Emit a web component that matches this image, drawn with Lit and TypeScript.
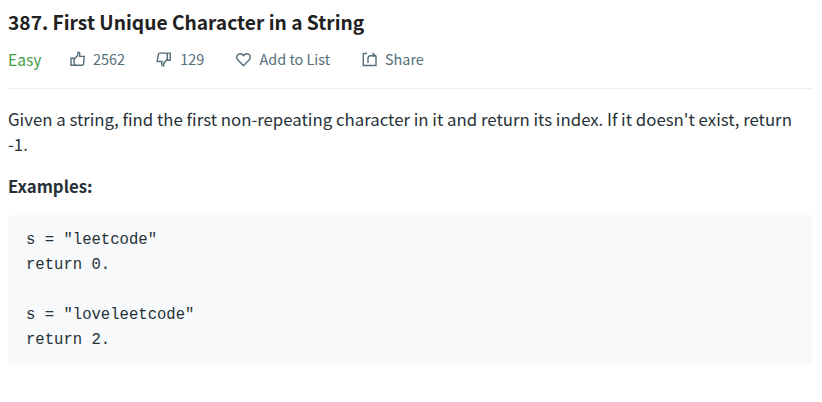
import { LitElement, html, css, svg } from "lit";
import { customElement } from "lit/decorators.js";

const thumb = svg`<path d="M1 7.3H4.1V14.2H1ZM4.1 8.2 7.6 4.4 8.1 1.3Q9.9 1.2 9.8 3.3L9.5 5.4H14.2L13.6 12.6Q13.4 14.2 12 14.2H5.6L4.1 13.3"/>`;
const thumbDown = svg`<path d="M14.2 1.1H11.3V8.3H14.2ZM11.3 7.3 7.9 10.9 7.6 14Q5.6 13.9 5.7 11.9L6 9.5H1.2L2.3 2.6Q2.6 1.1 3.8 1.1H9.7L11.3 2"/>`;
const heart = svg`<path d="M7.5 13.7 2 8.1C-.4 5.3 1 1.7 4.1 1.7Q6.2 1.7 7.5 3.5Q8.8 1.7 10.9 1.7C14 1.7 15.4 5.3 13 8.1Z"/>`;
const share = svg`<path d="M5 1.5H1.3V13.5H14V4.2"/><path d="M6 11V6.4Q6 3.8 8.4 3.8H14.2"/><path d="M10.8 .5 14.4 4.2H10.8Z" fill="currentColor" stroke-width=".5"/>`;

@customElement("app-root")
export class AppRoot extends LitElement {
  static styles = css`
    :host {
      display: block;
      height: 402px;
      box-sizing: border-box;
      padding: 10px 10px 0 8px;
      background: #fff;
      color: #263238;
      font-family: "Noto Sans CJK SC", sans-serif;
    }
    .title {
      margin: 0;
      height: 25px;
      font-size: 19.2px;
      line-height: 25px;
      font-weight: 700;
      color: #212121;
    }
    .bar {
      display: flex;
      align-items: flex-start;
      height: 54px;
      box-sizing: border-box;
      padding-top: 12px;
      border-bottom: 1px solid #eee;
      font-size: 14.4px;
      line-height: 24px;
      color: #546e7a;
      white-space: nowrap;
    }
    .easy { width: 62px; line-height: 24px; color: #43a047; font-size: 15.6px; }
    .action { display: flex; gap: 8px; }
    .up { width: 86.4px; }
    .up svg { margin-top: 4px; }
    .down { width: 79.6px; gap: 8.8px; }
    .list { width: 126px; gap: 8.6px; }
    svg { width: 15px; height: 15px; margin-top: 5px; fill: none; stroke: currentColor; stroke-width: 1.4; flex: none; }
    .text { margin: 18px 0 0; font-size: 16.81px; line-height: 25px; }
    .examples { margin: 17px 0 0; font-size: 16.8px; line-height: 25px; font-weight: 700; }
    .code {
      margin: 16px 0 0;
      height: 149px;
      box-sizing: border-box;
      padding: 13px 18px 11px;
      background: #f7f9fa;
      border-radius: 3px;
      font: 15.6px/25px "Liberation Mono", monospace;
    }
  `;

  render() {
    return html`
      <h1 class="title">387. First Unique Character in a String</h1>
      <div class="bar">
        <span class="easy">Easy</span>
        <span class="action up"><svg viewBox="0 0 15 15">${thumb}</svg><span>2562</span></span>
        <span class="action down"><svg viewBox="0 0 15 15">${thumbDown}</svg><span>129</span></span>
        <span class="action list"><svg viewBox="0 0 15 15">${heart}</svg><span>Add to List</span></span>
        <span class="action"><svg viewBox="0 0 15 15">${share}</svg><span>Share</span></span>
      </div>
      <p class="text">Given a string, find the first non-repeating character in it and return its index. If it doesn't exist, return -1.</p>
      <p class="examples">Examples:</p>
      <pre class="code">s = "leetcode"
return 0.

s = "loveleetcode"
return 2.</pre>
    `;
  }
}
